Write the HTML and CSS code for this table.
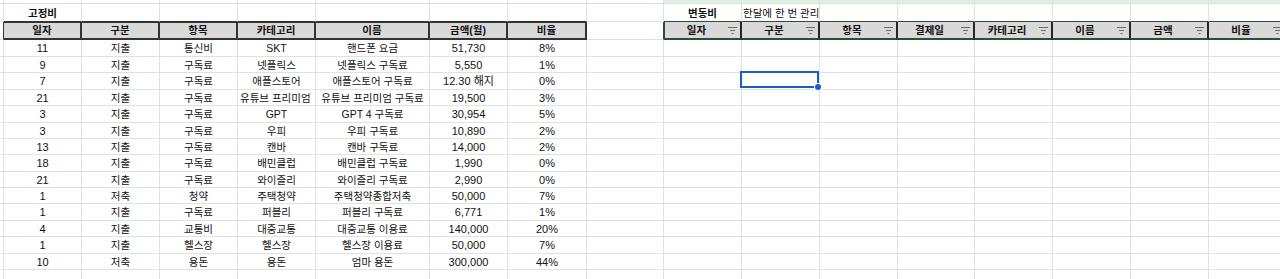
FILE: index.html
```html
<!DOCTYPE html>
<html lang="ko">
<head>
<meta charset="utf-8">
<title>고정비 / 변동비</title>
<link rel="stylesheet" href="styles.css">
</head>
<body>
<div class="sheet">
  <!-- row 0 (partial) -->
  <div></div><div></div><div></div><div></div><div></div><div></div><div></div><div></div><div></div>
  <div class="g"></div><div class="g"></div><div class="g"></div><div class="g"></div><div class="g"></div><div class="g"></div><div class="g"></div><div class="g"></div>

  <!-- title row -->
  <div></div>
  <div class="ttl dk">고정비</div><div class="dk"></div><div class="dk"></div><div class="dk"></div><div class="dk"></div><div class="dk"></div><div class="dk"></div>
  <div></div>
  <div class="ttl gk">변동비</div><div class="note gk">한달에 한 번 관리</div><div class="gk"></div><div class="gk"></div><div class="gk"></div><div class="gk"></div><div class="gk"></div><div class="gk"></div>

  <!-- header row -->
  <div class="edge"></div>
  <div class="th first">일자</div><div class="th">구분</div><div class="th">항목</div><div class="th">카테고리</div><div class="th">이름</div><div class="th">금액(월)</div><div class="th last">비율</div>
  <div class="gedge"></div>
  <div class="fh fhfirst"><span>일자</span><svg class="flt" viewBox="0 0 9 7" width="9" height="7"><path d="M0 .5h9M2 3.5h5M3.5 6.5h2"/></svg></div>
  <div class="fh"><span>구분</span><svg class="flt" viewBox="0 0 9 7" width="9" height="7"><path d="M0 .5h9M2 3.5h5M3.5 6.5h2"/></svg></div>
  <div class="fh"><span>항목</span><svg class="flt" viewBox="0 0 9 7" width="9" height="7"><path d="M0 .5h9M2 3.5h5M3.5 6.5h2"/></svg></div>
  <div class="fh"><span>결제일</span><svg class="flt" viewBox="0 0 9 7" width="9" height="7"><path d="M0 .5h9M2 3.5h5M3.5 6.5h2"/></svg></div>
  <div class="fh"><span>카테고리</span><svg class="flt" viewBox="0 0 9 7" width="9" height="7"><path d="M0 .5h9M2 3.5h5M3.5 6.5h2"/></svg></div>
  <div class="fh"><span>이름</span><svg class="flt" viewBox="0 0 9 7" width="9" height="7"><path d="M0 .5h9M2 3.5h5M3.5 6.5h2"/></svg></div>
  <div class="fh"><span>금액</span><svg class="flt" viewBox="0 0 9 7" width="9" height="7"><path d="M0 .5h9M2 3.5h5M3.5 6.5h2"/></svg></div>
  <div class="fh"><span>비율</span><svg class="flt" viewBox="0 0 9 7" width="9" height="7"><path d="M0 .5h9M2 3.5h5M3.5 6.5h2"/></svg></div>

  <!-- data 1 -->
  <div></div>
  <div class="n">11</div><div>지출</div><div>통신비</div><div>SKT</div><div>핸드폰 요금</div><div class="n">51,730</div><div class="n">8%</div>
  <div></div><div></div><div></div><div></div><div></div><div></div><div></div><div></div><div></div>
  <!-- data 2 -->
  <div></div>
  <div class="n">9</div><div>지출</div><div>구독료</div><div>넷플릭스</div><div>넷플릭스 구독료</div><div class="n">5,550</div><div class="n">1%</div>
  <div></div><div></div><div></div><div></div><div></div><div></div><div></div><div></div><div></div>
  <!-- data 3 -->
  <div></div>
  <div class="n">7</div><div>지출</div><div>구독료</div><div>애플스토어</div><div>애플스토어 구독료</div><div class="n">12.30 해지</div><div class="n">0%</div>
  <div></div><div></div><div class="sel"></div><div></div><div></div><div></div><div></div><div></div><div></div>
  <!-- data 4 -->
  <div></div>
  <div class="n">21</div><div>지출</div><div>구독료</div><div class="clip">유튜브 프리미엄</div><div>유튜브 프리미엄 구독료</div><div class="n">19,500</div><div class="n">3%</div>
  <div></div><div></div><div></div><div></div><div></div><div></div><div></div><div></div><div></div>
  <!-- data 5 -->
  <div></div>
  <div class="n">3</div><div>지출</div><div>구독료</div><div>GPT</div><div>GPT 4 구독료</div><div class="n">30,954</div><div class="n">5%</div>
  <div></div><div></div><div></div><div></div><div></div><div></div><div></div><div></div><div></div>
  <!-- data 6 -->
  <div></div>
  <div class="n">3</div><div>지출</div><div>구독료</div><div>우피</div><div>우피 구독료</div><div class="n">10,890</div><div class="n">2%</div>
  <div></div><div></div><div></div><div></div><div></div><div></div><div></div><div></div><div></div>
  <!-- data 7 -->
  <div></div>
  <div class="n">13</div><div>지출</div><div>구독료</div><div>캔바</div><div>캔바 구독료</div><div class="n">14,000</div><div class="n">2%</div>
  <div></div><div></div><div></div><div></div><div></div><div></div><div></div><div></div><div></div>
  <!-- data 8 -->
  <div></div>
  <div class="n">18</div><div>지출</div><div>구독료</div><div>배민클럽</div><div>배민클럽 구독료</div><div class="n">1,990</div><div class="n">0%</div>
  <div></div><div></div><div></div><div></div><div></div><div></div><div></div><div></div><div></div>
  <!-- data 9 -->
  <div></div>
  <div class="n">21</div><div>지출</div><div>구독료</div><div>와이즐리</div><div>와이즐리 구독료</div><div class="n">2,990</div><div class="n">0%</div>
  <div></div><div></div><div></div><div></div><div></div><div></div><div></div><div></div><div></div>
  <!-- data 10 -->
  <div></div>
  <div class="n">1</div><div>저축</div><div>청약</div><div>주택청약</div><div>주택청약종합저축</div><div class="n">50,000</div><div class="n">7%</div>
  <div></div><div></div><div></div><div></div><div></div><div></div><div></div><div></div><div></div>
  <!-- data 11 -->
  <div></div>
  <div class="n">1</div><div>지출</div><div>구독료</div><div>퍼블리</div><div>퍼블리 구독료</div><div class="n">6,771</div><div class="n">1%</div>
  <div></div><div></div><div></div><div></div><div></div><div></div><div></div><div></div><div></div>
  <!-- data 12 -->
  <div></div>
  <div class="n">4</div><div>지출</div><div>교통비</div><div>대중교통</div><div>대중교통 이용료</div><div class="n">140,000</div><div class="n">20%</div>
  <div></div><div></div><div></div><div></div><div></div><div></div><div></div><div></div><div></div>
  <!-- data 13 -->
  <div></div>
  <div class="n">1</div><div>지출</div><div>헬스장</div><div>헬스장</div><div>헬스장 이용료</div><div class="n">50,000</div><div class="n">7%</div>
  <div></div><div></div><div></div><div></div><div></div><div></div><div></div><div></div><div></div>
  <!-- data 14 -->
  <div></div>
  <div class="n">10</div><div>저축</div><div>용돈</div><div>용돈</div><div>엄마 용돈</div><div class="n">300,000</div><div class="n">44%</div>
  <div></div><div></div><div></div><div></div><div></div><div></div><div></div><div></div><div></div>
  <!-- empty row -->
  <div></div><div></div><div></div><div></div><div></div><div></div><div></div><div></div><div></div>
  <div></div><div></div><div></div><div></div><div></div><div></div><div></div><div></div>
</div>
</body>
</html>
```

FILE: styles.css
```css
html, body {
  margin: 0;
  padding: 0;
  background: #ffffff;
  overflow: hidden;
}

body {
  font-family: "Liberation Sans", "Noto Sans CJK KR", sans-serif;
  font-size: 10.5px;
  color: #111111;
}

.sheet {
  display: grid;
  grid-template-columns: 4px 78px 78px 78px 78px 114px 78px 79px 77px 78px 78px 78px 77px 78px 78px 78px 78px;
  grid-template-rows: 4px 18px 18px 17px 16px 17px 16px 17px 16px 16px 17px 16px 16px 17px 16px 17px 16px 17px;
  width: 1287px;
}

.sheet > div {
  box-sizing: border-box;
  border-right: 1px solid #e1e1e1;
  border-bottom: 1px solid #e1e1e1;
  display: flex;
  align-items: center;
  justify-content: center;
  white-space: nowrap;
  overflow: hidden;
  line-height: 1;
  padding-top: 1px;
}

.sheet > .n {
  font-size: 11px;
}

.sheet > .g {
  background: #dcefe1;
}

.sheet > .ttl {
  font-weight: bold;
  padding-top: 2px;
}

.sheet > .note {
  justify-content: flex-start;
  overflow: visible;
  padding-left: 1px;
  padding-top: 2px;
}

.sheet > .dk {
  border-bottom-color: #333333;
}

.sheet > .gk {
  border-bottom-color: #2a5232;
}

.sheet > .edge {
  border-right-color: #333333;
}

.sheet > .gedge {
  border-right-color: #2a5232;
}

.sheet > .th {
  background: #d9d9d9;
  font-weight: bold;
  border-top: 1px solid #333333;
  border-bottom: 2px solid #333333;
  border-right: 2px solid #333333;
  padding-top: 0;
}

.sheet > .fh {
  background: #d9d9d9;
  font-weight: bold;
  border-bottom: 2px solid #2a5232;
  border-right: 2px solid #262626;
  padding-top: 0;
  justify-content: space-between;
}

.sheet > .fhfirst {
  border-left: 1px solid #2a5232;
}

.fh span {
  flex: 1;
  text-align: center;
}

.flt {
  flex: none;
  margin-right: 3px;
  margin-top: 1px;
  fill: none;
  stroke: #5f7264;
  stroke-width: 1;
}

.sheet > .clip {
  justify-content: flex-start;
  padding-left: 2px;
}

.sheet > .sel {
  position: relative;
  overflow: visible;
  z-index: 2;
}

.sel::after {
  content: "";
  position: absolute;
  left: -2px;
  top: -2px;
  width: 79px;
  height: 17px;
  box-sizing: border-box;
  border: 2px solid #1a5cc8;
}

.sel::before {
  content: "";
  position: absolute;
  left: 73px;
  top: 11px;
  width: 6px;
  height: 6px;
  border-radius: 50%;
  background: #1a5cc8;
  box-shadow: 0 0 0 1px #ffffff;
  z-index: 1;
}
```
